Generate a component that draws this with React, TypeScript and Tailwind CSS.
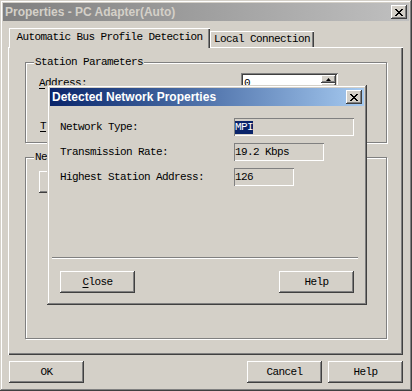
const mono = "font-['Liberation_Mono','DejaVu_Sans_Mono',monospace] text-[11px] tracking-[-0.6px] text-black";
const sans = "font-['Liberation_Sans',Arial,sans-serif]";

const raised =
  "bg-[#d4d0c8] shadow-[inset_-1px_-1px_#404040,inset_1px_1px_#ffffff,inset_-2px_-2px_#808080,inset_2px_2px_#d4d0c8]";
const frame =
  "bg-[#d4d0c8] shadow-[inset_-1px_-1px_#404040,inset_1px_1px_#d4d0c8,inset_-2px_-2px_#808080,inset_2px_2px_#ffffff]";

const X_PIX = ["11000011", "01100110", "00111100", "00011000", "00111100", "01100110", "11000011"];

function CloseGlyph() {
  return (
    <svg width="8" height="7" viewBox="0 0 8 7" shapeRendering="crispEdges">
      {X_PIX.map((row, y) =>
        row.split("").map((c, x) =>
          c === "1" ? <rect key={`${x}-${y}`} x={x} y={y} width="1" height="1" fill="#000" /> : null
        )
      )}
    </svg>
  );
}

function TitleClose() {
  return (
    <div className={`${raised} flex h-[14px] w-[16px] items-center justify-center`}>
      <CloseGlyph />
    </div>
  );
}

function Button({ label, underline }: { label: string; underline?: boolean }) {
  return (
    <div className={`${raised} ${mono} flex h-[22px] w-[75px] items-center justify-center`}>
      {underline ? (
        <span>
          <span className="underline underline-offset-2">{label[0]}</span>
          {label.slice(1)}
        </span>
      ) : (
        label
      )}
    </div>
  );
}

function Group({ title, className, children }: { title: string; className: string; children?: React.ReactNode }) {
  return (
    <div className={`relative border border-[#808080] shadow-[inset_1px_1px_#ffffff,1px_1px_#ffffff] ${className}`}>
      <span className={`${mono} absolute -top-[8px] left-[8px] bg-[#d4d0c8] px-[1px] leading-[14px]`}>{title}</span>
      {children}
    </div>
  );
}

function Field({ value, width, selected }: { value: string; width: string; selected?: boolean }) {
  return (
    <div className={`${width} flex h-[18px] items-center bg-[#d4d0c8] pl-[1px] shadow-[inset_1px_1px_#808080,inset_-1px_-1px_#ffffff]`}>
      <span className={`${mono} leading-[13px] ${selected ? "bg-[#0a246a] text-white" : ""}`}>{value}</span>
    </div>
  );
}

const rows = [
  { label: "Network Type:", value: "MPI", width: "w-[120px]", selected: true },
  { label: "Transmission Rate:", value: "19.2 Kbps", width: "w-[90px]", selected: false },
  { label: "Highest Station Address:", value: "126", width: "w-[60px]", selected: false },
];

function DetectedDialog() {
  return (
    <div className={`${frame} absolute left-[47px] top-[85px] flex h-[220px] w-[320px] flex-col p-[3px]`}>
      <div className="flex h-[18px] items-center justify-between bg-gradient-to-r from-[#0a246a] to-[#a6caf0] pl-[2px] pr-[2px]">
        <span className={`${sans} text-[12px] font-bold text-white`}>Detected Network Properties</span>
        <TitleClose />
      </div>

      <div className="mt-[12px] flex flex-col gap-[7px] pl-[10px]">
        {rows.map((r) => (
          <div key={r.label} className="flex h-[18px] items-center">
            <span className={`${mono} w-[174px]`}>{r.label}</span>
            <Field value={r.value} width={r.width} selected={r.selected} />
          </div>
        ))}
      </div>

      <div className="ml-[2px] mt-[71px] h-[2px] w-[306px] border-t border-b border-t-[#808080] border-b-white" />

      <div className="mt-[12px] flex justify-between px-[10px]">
        <Button label="Close" underline />
        <Button label="Help" />
      </div>
    </div>
  );
}

export default function App() {
  return (
    <div className={`${frame} relative flex h-[391px] w-[412px] flex-col p-[3px]`}>
      <div className="flex h-[18px] items-center justify-between bg-gradient-to-r from-[#808080] to-[#c0c0c0] pl-[2px] pr-[2px]">
        <span className={`${sans} text-[12px] font-bold text-[#d4d0c8]`}>Properties - PC Adapter(Auto)</span>
        <TitleClose />
      </div>

      <div className="flex flex-1 flex-col pl-[5px] pr-[6px] pt-[7px]">
        <div className="ml-[1px] flex h-[19px] items-end">
          <div className={`${mono} relative z-10 -mb-px flex h-[20px] w-[201px] items-center justify-center bg-[#d4d0c8] pb-[2px] shadow-[inset_1px_1px_#ffffff,inset_-1px_0_#404040,inset_-2px_0_#808080]`}>
            Automatic Bus Profile Detection
          </div>
          <div className={`${mono} flex h-[16px] w-[104px] items-center justify-center bg-[#d4d0c8] shadow-[inset_1px_1px_#ffffff,inset_-1px_0_#404040,inset_-2px_0_#808080]`}>
            Local Connection
          </div>
        </div>

        <div className="flex h-[308px] flex-col bg-[#d4d0c8] pl-[17px] pr-[16px] pt-[15px] shadow-[inset_1px_1px_#ffffff,inset_-1px_-1px_#404040,inset_-2px_-2px_#808080]">
          <Group title="Station Parameters" className="h-[81px]">
            <div className="mt-[10px] flex h-[20px] items-center pl-[13px]">
              <span className={`${mono} w-[202px]`}>
                <span className="underline underline-offset-2">A</span>ddress:
              </span>
              <div className="flex h-[20px] w-[97px] items-center bg-white p-[2px] shadow-[inset_1px_1px_#808080,inset_-1px_-1px_#ffffff,inset_2px_2px_#404040,inset_-2px_-2px_#d4d0c8]">
                <span className={`${mono} flex-1 pl-[1px]`}>0</span>
                <div className="flex h-full w-[15px] flex-col">
                  <div className={`${raised} flex flex-1 items-center justify-center`}>
                    <svg width="5" height="3" viewBox="0 0 5 3"><path d="M2.5 0L5 3H0z" fill="#000" /></svg>
                  </div>
                  <div className={`${raised} flex flex-1 items-center justify-center`}>
                    <svg width="5" height="3" viewBox="0 0 5 3"><path d="M0 0H5L2.5 3z" fill="#000" /></svg>
                  </div>
                </div>
              </div>
            </div>
            {/* only the first letter shows left of the dialog */}
            <div className="mt-[23px] flex h-[20px] items-center pl-[14px]">
              <span className={mono}>
                <span className="underline underline-offset-2">T</span>
              </span>
            </div>
          </Group>

          <Group title="Ne" className="mt-[14px] h-[182px]">
            <div className={`${raised} ml-[13px] mt-[13px] h-[22px] w-[120px]`} />
          </Group>
        </div>

        <div className="mt-[6px] flex">
          <div className="ml-[1px]">
            <Button label="OK" />
          </div>
          <div className="ml-auto flex gap-[6px]">
            <Button label="Cancel" />
            <Button label="Help" />
          </div>
        </div>
      </div>

      <DetectedDialog />
    </div>
  );
}
